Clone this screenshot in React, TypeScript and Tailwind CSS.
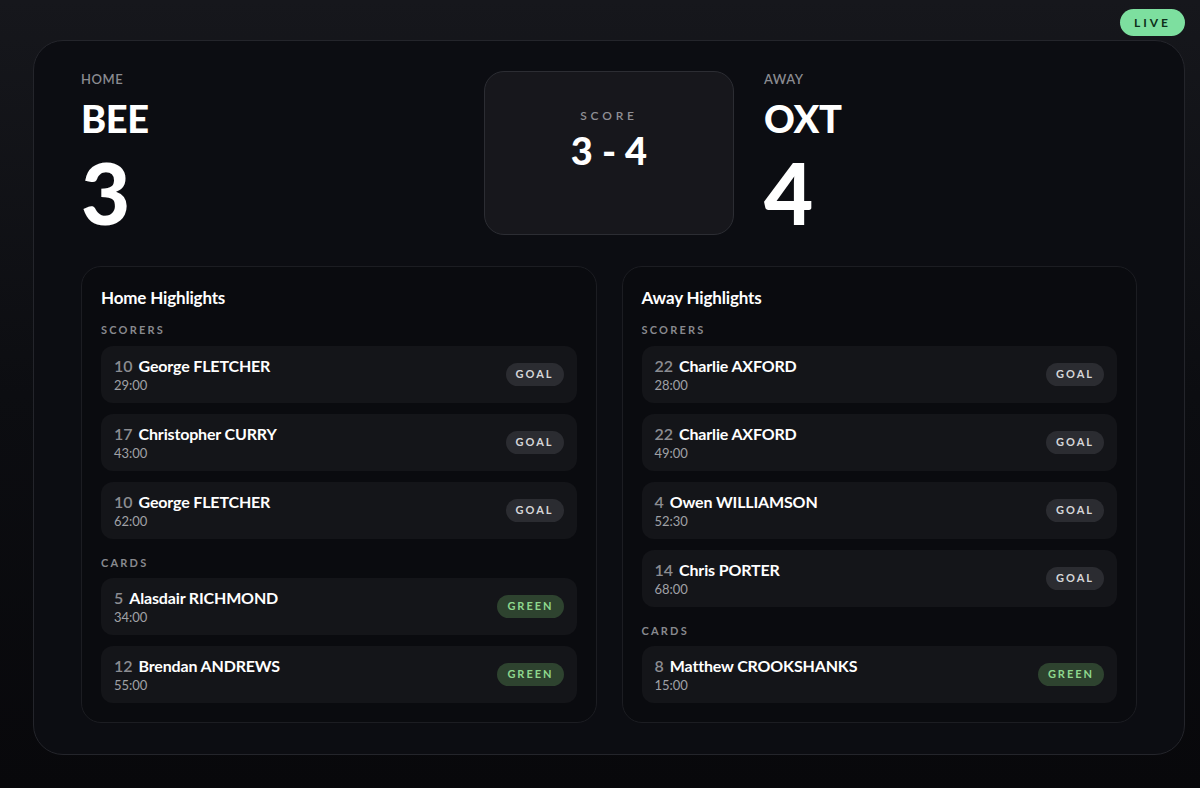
import React from "react";

type Entry = { no: number; name: string; time: string; kind: "GOAL" | "GREEN" };

const home: { scorers: Entry[]; cards: Entry[] } = {
  scorers: [
    { no: 10, name: "George FLETCHER", time: "29:00", kind: "GOAL" },
    { no: 17, name: "Christopher CURRY", time: "43:00", kind: "GOAL" },
    { no: 10, name: "George FLETCHER", time: "62:00", kind: "GOAL" },
  ],
  cards: [
    { no: 5, name: "Alasdair RICHMOND", time: "34:00", kind: "GREEN" },
    { no: 12, name: "Brendan ANDREWS", time: "55:00", kind: "GREEN" },
  ],
};

const away: { scorers: Entry[]; cards: Entry[] } = {
  scorers: [
    { no: 22, name: "Charlie AXFORD", time: "28:00", kind: "GOAL" },
    { no: 22, name: "Charlie AXFORD", time: "49:00", kind: "GOAL" },
    { no: 4, name: "Owen WILLIAMSON", time: "52:30", kind: "GOAL" },
    { no: 14, name: "Chris PORTER", time: "68:00", kind: "GOAL" },
  ],
  cards: [{ no: 8, name: "Matthew CROOKSHANKS", time: "15:00", kind: "GREEN" }],
};

function Row({ e }: { e: Entry }) {
  return (
    <div className="flex h-[57px] items-center justify-between rounded-xl bg-[#141519] px-[13px]">
      <div className="flex flex-col">
        <div className="flex items-baseline gap-[6px] text-[16px] leading-5">
          <span className="font-semibold text-[#8b8c91]">{e.no}</span>
          <span className="font-bold tracking-[-0.01em] text-white">{e.name}</span>
        </div>
        <span className="text-[13px] leading-[18px] text-[#a0a1a6]">{e.time}</span>
      </div>
      {e.kind === "GOAL" ? (
        <span className="rounded-full bg-[#2b2c31] px-[10px] py-[3px] text-[11px] font-bold tracking-[0.18em] text-[#d6d6d8]">
          GOAL
        </span>
      ) : (
        <span className="rounded-full bg-[#2e432f] px-[10px] py-[3px] text-[11px] font-bold tracking-[0.18em] text-[#8ed88e]">
          GREEN
        </span>
      )}
    </div>
  );
}

function Panel({ title, data }: { title: string; data: { scorers: Entry[]; cards: Entry[] } }) {
  return (
    <div className="rounded-[20px] border border-[#1c1d22] bg-[#0a0b0f] p-[19px]">
      <h2 className="text-[17px] leading-6 font-bold tracking-[-0.01em] text-white">{title}</h2>
      <p className="mt-3 mb-2 text-[11px] leading-4 font-bold tracking-[0.2em] text-[#88898e]">SCORERS</p>
      <div className="flex flex-col gap-[11px]">
        {data.scorers.map((e, i) => (
          <Row key={i} e={e} />
        ))}
      </div>
      <p className="mt-4 mb-[7px] text-[11px] leading-4 font-bold tracking-[0.2em] text-[#88898e]">CARDS</p>
      <div className="flex flex-col gap-[11px]">
        {data.cards.map((e, i) => (
          <Row key={i} e={e} />
        ))}
      </div>
    </div>
  );
}

function Team({ side, code, score }: { side: string; code: string; score: number }) {
  return (
    <div className="flex flex-col">
      <span className="text-[13px] leading-4 font-semibold tracking-[0.04em] text-[#8a8b90]">{side}</span>
      <span className="mt-[11px] text-[38px] leading-[40px] font-black tracking-[-0.01em] text-white">{code}</span>
      <span className="mt-[12px] text-[85px] leading-[85px] font-black text-white">{score}</span>
    </div>
  );
}

export default function App() {
  return (
    <div
      className="h-[788px] w-[1200px] overflow-hidden bg-gradient-to-b from-[#16171c] via-[#0c0d11] to-[#08080b]"
      style={{ fontFamily: "Lato, 'Noto Sans', sans-serif" }}
    >
      <div className="flex h-10 justify-end pt-[9px] pr-[15px]">
        <span className="flex h-[27px] items-center rounded-full bg-[#7ddf9f] px-[14px] text-[12px] font-bold tracking-[0.25em] text-[#0d2f1a]">
          LIVE
        </span>
      </div>
      <div className="ml-[33px] h-[715px] w-[1152px] rounded-[30px] border border-[#24252b] bg-[#0c0d12] px-[47px] pt-[30px]">
        <div className="grid grid-cols-[1fr_250px_1fr] gap-[30px]">
          <Team side="HOME" code="BEE" score={3} />
          <div className="flex h-[164px] flex-col items-center rounded-[20px] border border-[#2c2d33] bg-[#17171c] pt-[36px]">
            <span className="text-[12px] leading-4 font-semibold tracking-[0.32em] text-[#8f9095]">SCORE</span>
            <span className="mt-[4px] text-[38px] leading-[44px] font-black text-white">3 - 4</span>
          </div>
          <Team side="AWAY" code="OXT" score={4} />
        </div>
        <div className="mt-[31px] grid grid-cols-2 gap-[25px]">
          <Panel title="Home Highlights" data={home} />
          <Panel title="Away Highlights" data={away} />
        </div>
      </div>
    </div>
  );
}
